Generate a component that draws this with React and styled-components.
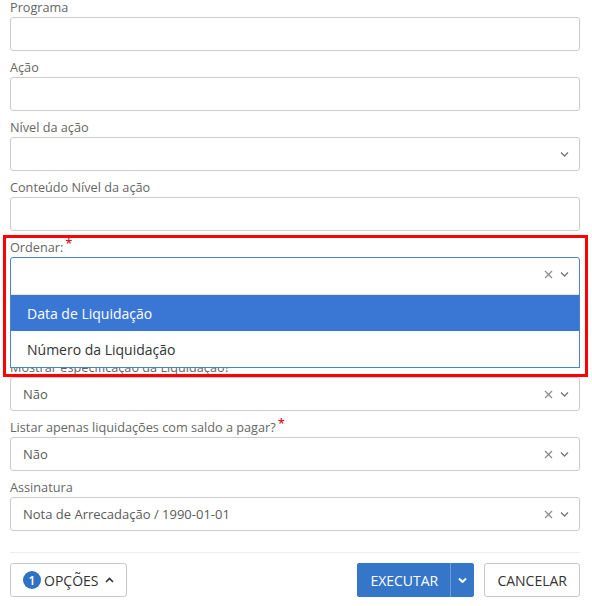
import React from "react";
import styled, { createGlobalStyle } from "styled-components";

const GlobalStyle = createGlobalStyle`
  html, body {
    margin: 0;
    padding: 0;
    background: #fff;
  }
  body {
    font-family: "Open Sans", "Noto Sans", Arial, sans-serif;
    color: #555;
  }
`;

const Page = styled.div`
  position: relative;
  width: 592px;
  height: 606px;
  overflow: hidden;
  padding: 0 12px 0 10px;
  box-sizing: border-box;
`;

const Form = styled.div`
  display: flex;
  flex-direction: column;
`;

const Field = styled.div`
  position: relative;
  display: flex;
  flex-direction: column;
  margin-bottom: 9px;
`;

const Label = styled.label`
  font-size: 12.7px;
  line-height: 14px;
  height: 17px;
  color: #666;
  white-space: nowrap;
`;

const Required = styled.span`
  color: #d21f28;
  font-size: 13px;
  font-weight: 600;
  position: relative;
  top: -4px;
  margin-left: 2px;
`;

const Control = styled.div`
  height: 34px;
  box-sizing: border-box;
  border: 1px solid ${(p) => (p.$open ? "#4d84c9" : "#ccc")};
  border-radius: ${(p) => (p.$open ? "3px 3px 0 0" : "3px")};
  background: #fff;
  display: flex;
  align-items: center;
  padding: 0 10px 0 12px;
  font-size: 13px;
  color: #5a5a5a;
`;

const Value = styled.span`
  flex: 1;
  white-space: nowrap;
`;

const Icons = styled.span`
  display: flex;
  align-items: center;
  gap: 7px;
  color: #888;
`;

const Menu = styled.div`
  position: absolute;
  left: 0;
  right: 0;
  top: 50px;
  background: #fff;
  border: 1px solid #4d84c9;
  border-top: none;
  z-index: 2;
`;

const MenuSpacer = styled.div`
  height: 4px;
  border-bottom: 1px solid #e6e6e6;
`;

const Option = styled.div`
  height: 36px;
  display: flex;
  align-items: center;
  padding-left: 16px;
  font-size: 14px;
  color: ${(p) => (p.$active ? "#fff" : "#333")};
  background: ${(p) => (p.$active ? "#3a77d5" : "#fff")};
`;

const Highlight = styled.div`
  position: absolute;
  left: 3px;
  top: 235px;
  width: 585px;
  height: 142px;
  box-sizing: border-box;
  border: 3px solid #ff0000;
  z-index: 3;
  pointer-events: none;
`;

const Divider = styled.div`
  height: 1px;
  background: #eee;
  margin-top: 12px;
`;

const Footer = styled.div`
  display: flex;
  align-items: center;
  padding-top: 10px;
  gap: 10px;
`;

const Button = styled.button`
  height: 34px;
  box-sizing: border-box;
  border-radius: 3px;
  font-family: "Open Sans", "Noto Sans", Arial, sans-serif;
  font-size: 14px;
  display: flex;
  align-items: center;
  padding: 0 ${(p) => p.$pad || 12}px;
  cursor: pointer;
  border: 1px solid ${(p) => (p.$primary ? "#3472c2" : "#c8c8c8")};
  background: ${(p) => (p.$primary ? "#3676c8" : "#fff")};
  color: ${(p) => (p.$primary ? "#fff" : "#333")};
`;

const Spacer = styled.div`
  flex: 1;
`;

const Badge = styled.span`
  width: 18px;
  height: 18px;
  border-radius: 50%;
  background: #2f72c4;
  color: #fff;
  font-size: 12px;
  font-weight: 600;
  display: inline-flex;
  align-items: center;
  justify-content: center;
  margin-right: 3px;
`;

const Caret = styled.span`
  display: flex;
  margin-left: 7px;
`;

const SplitGroup = styled.div`
  display: flex;
  height: 34px;
  border-radius: 3px;
  background: #3676c8;
  overflow: hidden;
`;

const SplitMain = styled(Button)`
  border: none;
  border-radius: 0;
  padding: 0 0 0 13px;
  width: 93px;
`;

const SplitToggle = styled.button`
  width: 24px;
  border: none;
  border-left: 1px solid #6c9bd6;
  background: #3676c8;
  display: flex;
  align-items: center;
  justify-content: center;
  padding: 0;
`;

const XIcon = () => (
  <svg width="9" height="9" viewBox="0 0 9 9">
    <path d="M1 1L8 8M8 1L1 8" stroke="#8a8a8a" strokeWidth="1.2" />
  </svg>
);

const Chevron = ({ color = "#777", up, w = 9, sw = 1.3 }) => (
  <svg width={w} height="6" viewBox="0 0 9 6">
    <path
      d={up ? "M1 5L4.5 1.5L8 5" : "M1 1.5L4.5 5L8 1.5"}
      stroke={color}
      strokeWidth={sw}
      fill="none"
    />
  </svg>
);

const TextField = ({ label }) => (
  <Field>
    <Label>{label}</Label>
    <Control />
  </Field>
);

const SelectField = ({ label, value, required, clear = true, open, children }) => (
  <Field>
    <Label>
      {label}
      {required && <Required>*</Required>}
    </Label>
    <Control $open={open}>
      <Value>{value}</Value>
      <Icons>
        {clear && <XIcon />}
        <Chevron />
      </Icons>
    </Control>
    {children}
  </Field>
);

export default function App() {
  return (
    <Page>
      <GlobalStyle />
      <Form>
        <TextField label="Programa" />
        <TextField label="Ação" />
        <SelectField label="Nível da ação" clear={false} />
        <TextField label="Conteúdo Nível da ação" />
        <SelectField label="Ordenar:" required open>
          <Menu>
            <MenuSpacer />
            <Option $active>Data de Liquidação</Option>
            <Option>Número da Liquidação</Option>
          </Menu>
        </SelectField>
        {/* row hidden under the open menu */}
        <SelectField label="" />
        <SelectField label="Mostrar especificação da Liquidação?" value="Não" />
        <SelectField
          label="Listar apenas liquidações com saldo a pagar?"
          value="Não"
          required
        />
        <SelectField label="Assinatura" value="Nota de Arrecadação / 1990-01-01" />
      </Form>
      <Divider />
      <Footer>
        <Button>
          <Badge>1</Badge>
          OPÇÕES
          <Caret>
            <Chevron up color="#333" sw={1.6} />
          </Caret>
        </Button>
        <Spacer />
        <SplitGroup>
          <SplitMain $primary>EXECUTAR</SplitMain>
          <SplitToggle>
            <Chevron color="#fff" sw={2} />
          </SplitToggle>
        </SplitGroup>
        <Button $pad={12}>CANCELAR</Button>
      </Footer>
      <Highlight />
    </Page>
  );
}
